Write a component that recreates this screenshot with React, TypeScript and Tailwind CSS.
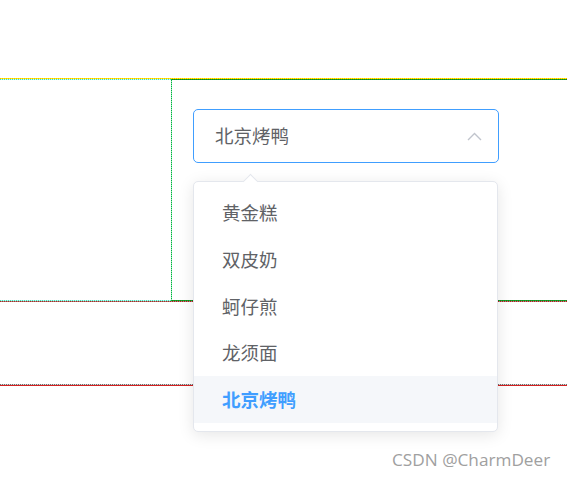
const OPTIONS = ["黄金糕", "双皮奶", "蚵仔煎", "龙须面", "北京烤鸭"];

const CJK = "font-['Noto_Sans_CJK_SC','Noto_Sans',sans-serif]";

function ChevronUp() {
  return (
    <svg width="15" height="9" viewBox="0 0 15 9" fill="none">
      <polyline points="1,8 7.5,1.5 14,8" stroke="#c0c4cc" strokeWidth="1.4" />
    </svg>
  );
}

function Select({ value }: { value: string }) {
  return (
    <div className="relative w-[306px]">
      <div className="flex h-[54px] items-center justify-between rounded-[5px] border border-[#409eff] bg-white pl-[21px] pr-[16px]">
        <span className={`${CJK} text-[18.5px] text-[#606266]`}>{value}</span>
        <ChevronUp />
      </div>

      <div className="absolute left-0 top-[72px] z-10 w-[305px] rounded-[5px] border border-[#e4e7ed] bg-white py-[8px] shadow-[0_3px_16px_rgba(0,0,0,0.1)]">
        <div className="absolute -top-[6px] left-[51px] h-[11px] w-[11px] rotate-45 border-l border-t border-[#e4e7ed] bg-white" />
        {OPTIONS.map((opt) => (
          <div
            key={opt}
            className={`${CJK} flex h-[46.6px] items-center px-[28px] text-[18.5px] ${
              opt === value ? "bg-[#f5f7fa] font-bold text-[#409eff]" : "text-[#606266]"
            }`}
          >
            {opt}
          </div>
        ))}
      </div>
    </div>
  );
}

// dotted debug lines, drawn as 1px gradients so the colours stay crisp
function Row({ left, right }: { left: string; right: string }) {
  return (
    <div className="flex h-px">
      <div className={`w-[171px] ${left}`} />
      <div className={`flex-1 ${right}`} />
    </div>
  );
}

export default function App() {
  return (
    <div className="relative h-[477px] w-[567px] overflow-hidden bg-white">
      <div className="h-[78px]" />
      <div className="h-px bg-[repeating-linear-gradient(to_right,#ffb000_0_1px,#ffff00_1px_2px)]" />
      <Row
        left="bg-[repeating-linear-gradient(to_right,#40e0c0_0_1px,#c8f8ee_1px_2px)]"
        right="bg-[repeating-linear-gradient(to_right,#00c020_0_1px,#2a6a2a_1px_2px)]"
      />
      <div className="flex h-[220px]">
        <div className="w-[171px]" />
        <div className="w-px bg-[repeating-linear-gradient(to_bottom,#00b040_0_1px,#90e8b0_1px_2px)]" />
        <div className="flex-1 pl-[21px] pt-[29px]">
          <Select value="北京烤鸭" />
        </div>
      </div>
      <Row
        left="bg-[repeating-linear-gradient(to_right,#40e0c0_0_1px,#c8f8ee_1px_2px)]"
        right="bg-[repeating-linear-gradient(to_right,#00c020_0_1px,#2a6a2a_1px_2px)]"
      />
      <div className="h-px bg-[repeating-linear-gradient(to_right,#c02010_0_1px,#909090_1px_2px)]" />
      <div className="h-[82px]" />
      <div className="h-px bg-[repeating-linear-gradient(to_right,#707070_0_1px,#d8d8d8_1px_2px)]" />
      <div className="h-px bg-[#d42020]" />

      <div className="absolute left-[392px] top-[447px] font-['Open_Sans',sans-serif] text-[17.2px] text-[#a0a0a0]">
        CSDN @CharmDeer
      </div>
    </div>
  );
}
